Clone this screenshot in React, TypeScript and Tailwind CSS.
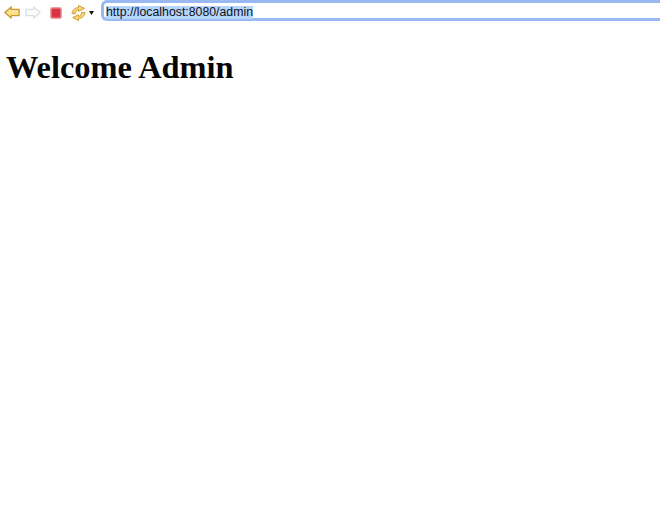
export default function App() {
  return (
    <div className="min-h-[517px] w-[660px] overflow-hidden bg-white">
      <div className="flex h-[25px] items-start pl-[4px]">
        <svg width="16" height="13" viewBox="0 0 16 13" className="mt-[6px] shrink-0">
          <path d="M0.9 6.5 L7.2 0.9 V3.4 H15.1 V9.6 H7.2 V12.1 Z" fill="#fbe08e" stroke="#c9982f" strokeWidth="1.3" strokeLinejoin="round" />
        </svg>
        <svg width="16" height="13" viewBox="0 0 16 13" className="ml-[5px] mt-[6px] shrink-0">
          <path d="M15.1 6.5 L8.8 0.9 V3.4 H0.9 V9.6 H8.8 V12.1 Z" fill="#fafbfc" stroke="#dcdfe3" strokeWidth="1.3" strokeLinejoin="round" />
        </svg>
        <svg width="12" height="12" viewBox="0 0 12 12" className="ml-[9px] mt-[7px] shrink-0">
          <rect x="0" y="0" width="12" height="12" rx="2" fill="#e9a3a6" />
          <rect x="1.5" y="1.5" width="9" height="9" rx="1" fill="#d8343f" />
        </svg>
        <svg width="15" height="16" viewBox="0 0 15 16" className="ml-[9px] mt-[5px] shrink-0">
          <path d="M1 8.6 C1.4 5 4.2 2.5 7.5 2.5 L7.5 0.5 L13.4 3.4 L7.5 6.3 L7.5 4.7 C6 4.7 4.8 5.8 4.3 8.6 Z" fill="#f8d47a" stroke="#c9962a" strokeWidth="0.9" strokeLinejoin="round" />
          <path d="M14 7.4 C13.6 11 10.8 13.5 7.5 13.5 L7.5 15.5 L1.6 12.6 L7.5 9.7 L7.5 11.3 C9 11.3 10.2 10.2 10.7 7.4 Z" fill="#f8d47a" stroke="#c9962a" strokeWidth="0.9" strokeLinejoin="round" />
        </svg>
        <svg width="5" height="4" viewBox="0 0 5 4" className="ml-[3px] mt-[11px] shrink-0">
          <path d="M0 0 H5 L2.5 4 Z" fill="#111111" />
        </svg>
        <div className="ml-[7px] flex h-[21px] min-w-0 flex-1 items-center rounded-l-[6px] border-y-[3px] border-l-[3px] border-[#9ab9f2] bg-white pl-[2px]">
          <span className="mt-[3px] bg-[#b4d5fe] font-['Liberation_Sans',sans-serif] text-[12.3px] leading-[13px] text-[#111111]">
            http://localhost:8080/admin
          </span>
        </div>
      </div>
      <h1 className="mt-[24px] pl-[6px] font-['Liberation_Serif',serif] text-[32.4px] leading-[36px] font-bold text-[#050505]">
        Welcome Admin
      </h1>
    </div>
  );
}
